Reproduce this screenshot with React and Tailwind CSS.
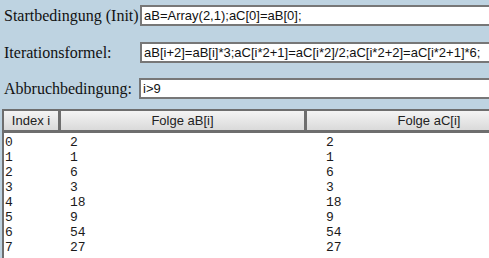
export default function App() {
  const rows = [
    [0, 2, 2],
    [1, 1, 1],
    [2, 6, 6],
    [3, 3, 3],
    [4, 18, 18],
    [5, 9, 9],
    [6, 54, 54],
    [7, 27, 27],
  ];
  const serif = { fontFamily: '"Liberation Serif", "Times New Roman", serif' };
  return (
    <div className="w-[489px] h-[258px] overflow-hidden bg-[#bed3e1] relative">
      <div className="pt-[5px] flex flex-col">
        <div className="flex items-center h-[21px]">
          <div className="w-[140px] shrink-0 pl-[4px] text-[16px] text-[#111] whitespace-nowrap leading-none" style={serif}>
            Startbedingung (Init)
          </div>
          <div className="w-[420px] shrink-0 h-[21px] bg-white border-2 border-[#777] flex items-center pl-[2px] text-[13px] text-[#111] whitespace-nowrap font-['Liberation_Sans',Arial,sans-serif]">
            aB=Array(2,1);aC[0]=aB[0];
          </div>
        </div>
        <div className="flex items-center h-[21px] mt-[16px]">
          <div className="w-[140px] shrink-0 pl-[4px] text-[16px] text-[#111] whitespace-nowrap leading-none" style={serif}>
            Iterationsformel:
          </div>
          <div className="w-[420px] shrink-0 h-[21px] bg-white border-2 border-[#777] flex items-center pl-[2px] text-[13px] text-[#111] whitespace-nowrap font-['Liberation_Sans',Arial,sans-serif]">
            aB[i+2]=aB[i]*3;aC[i*2+1]=aC[i*2]/2;aC[i*2+2]=aC[i*2+1]*6;
          </div>
        </div>
        <div className="flex items-center h-[21px] mt-[15px]">
          <div className="w-[139px] shrink-0 pl-[4px] text-[16px] text-[#111] whitespace-nowrap leading-none" style={serif}>
            Abbruchbedingung:
          </div>
          <div className="w-[420px] shrink-0 h-[21px] bg-white border-2 border-[#777] flex items-center pl-[2px] text-[13px] text-[#111] whitespace-nowrap font-['Liberation_Sans',Arial,sans-serif]">
            i&gt;9
          </div>
        </div>
        <div className="mt-[10px] ml-[2px] w-[560px] h-[160px] shrink-0 border-t-2 border-l-2 border-[#6e6e6e] bg-white">
          <div className="flex h-[22px] border-b-[3px] border-[#6e6e6e] bg-gradient-to-b from-[#f4f4f4] to-[#dadada] text-[13px] text-[#222] font-['Liberation_Sans',Arial,sans-serif]">
            <div className="w-[54px] shrink-0 flex items-center justify-center">Index i</div>
            <div className="w-[3px] shrink-0 bg-[#6e6e6e]"></div>
            <div className="w-[243px] shrink-0 flex items-center justify-center">Folge aB[i]</div>
            <div className="w-[3px] shrink-0 bg-[#6e6e6e]"></div>
            <div className="w-[244px] shrink-0 flex items-center justify-center">Folge aC[i]</div>
          </div>
          <div className="pt-[2px] text-[13px] text-[#1a1a1a] font-['Liberation_Mono','Courier_New',monospace]">
            {rows.map((r) => (
              <div key={r[0]} className="flex h-[15px] items-center leading-none">
                <div className="w-[66px] shrink-0 pl-[1px]">{r[0]}</div>
                <div className="w-[256px] shrink-0">{r[1]}</div>
                <div>{r[2]}</div>
              </div>
            ))}
          </div>
        </div>
      </div>
    </div>
  );
}
